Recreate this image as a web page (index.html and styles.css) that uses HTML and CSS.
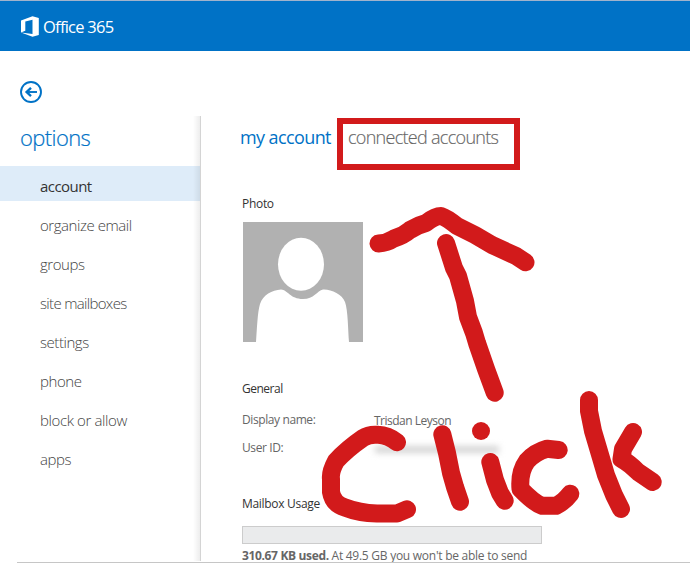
FILE: index.html
```html
<!DOCTYPE html>
<html lang="en">
<head>
<meta charset="utf-8">
<title>Office 365</title>
<link rel="stylesheet" href="styles.css">
</head>
<body>
<header class="topbar">
  <svg class="logo" width="18" height="21" viewBox="0 0 18 21"><path fill="#fff" fill-rule="evenodd" d="M0 4.500 11.500.3 17.800 2v17l-6.300 1.700L0 16.500l11.500 1.400V3.800L4.300 5.500v9.200L0 16.500z"/></svg>
  <span class="brand">Office 365</span>
</header>
<div class="layout">
  <aside class="sidebar">
    <svg class="back" width="22" height="22" viewBox="0 0 22 22" fill="none" stroke="#0072c6" stroke-width="1.9"><circle cx="11" cy="11" r="10"/><path d="M17 11H7"/><path d="M11 6.800 6.600 11l4.400 4.200" stroke-width="2.4"/></svg>
    <h1 class="title">options</h1>
    <nav class="menu">
      <a class="item selected">account</a>
      <a class="item">organize email</a>
      <a class="item">groups</a>
      <a class="item tight">site mailboxes</a>
      <a class="item">settings</a>
      <a class="item">phone</a>
      <a class="item loose">block or allow</a>
      <a class="item">apps</a>
    </nav>
  </aside>
  <div class="divider"></div>
  <main class="content">
    <div class="tabs"><span class="tab current">my account</span><span class="tab">connected accounts</span></div>
    <h2 class="heading">Photo</h2>
    <svg class="photo" width="120" height="120" viewBox="0 0 120 120"><path fill="#b1b1b1" d="M0 0h120v120H0z"/><ellipse cx="58" cy="42.300" rx="23" ry="26.500" fill="#fff"/><path fill="#fff" d="M13 120C14 107 14.500 90 17 82C20 73 29 68 38 67.500C45 68 47 77 60 77C71 77 74 69 80 67.500C88 67 99 72 102 80C105 88 105 108 106 120z"/></svg>
    <h2 class="heading general">General</h2>
    <dl class="details">
      <dt>Display name:</dt><dd class="name">Trisdan Leyson</dd>
      <dt>User ID:</dt><dd><span class="hidden-id"></span></dd>
    </dl>
    <h2 class="heading usage">Mailbox Usage</h2>
    <div class="meter"></div>
    <p class="quota"><b>310.67 KB used.</b> <span>At 49.5 GB you won't be able to send</span></p>
  </main>
</div>
<div class="bottom-line"></div>
<svg class="markup" width="690" height="563" viewBox="0 0 690 563" fill="none" stroke="#d21a1b" stroke-width="18" stroke-linecap="round" stroke-linejoin="round">
  <path d="M340 121H517V167H340z" stroke-width="6" stroke-linejoin="miter"/>
  <path d="M378.500 243.500Q387 243 394 238.500Q403 236 410 230Q418 225 426 223Q435 216 441 216Q447 218 457 226L475 235L492 245L516 256L525.500 262.300"/>
  <path d="M446 243L454 268L458 276L465 301L468 317L474 333L477 343L486 369L494.700 392.700"/>
  <path d="M397 442.300Q388 435 378 434.800Q369 434 363 438Q347 449 336 461Q330 472 331 479V492Q333 504 345 507.500Q359 513 377 513.600H397L407 509.300"/>
  <path d="M442.300 434.300L447 453L451 473L455 487L460 501.700"/>
  <path d="M481 431h.01"/>
  <path d="M490.300 462L495 480L500 493L504.700 500.700"/>
  <path d="M558.700 450L547 448.700Q535 452 527 461Q519 472 520.500 489Q534 503 542 505.800H556Q564 502 570.300 493.700"/>
  <path d="M589 400V411L593 431L601 458L606 475L614 495L621 509"/>
  <path d="M633 432L623 449L621.500 459Q629 463 638 472L652.700 482"/>
</svg>
</body>
</html>
```
FILE: styles.css
```css
* { box-sizing: border-box; }
body {
  margin: 0;
  height: 563px;
  overflow: hidden;
  position: relative;
  background: #fff;
  color: #666;
  font-family: "Open Sans", "Noto Sans", sans-serif;
  font-size: 12px;
  display: flex;
  flex-direction: column;
}
.topbar {
  height: 51px;
  flex: none;
  background: #0072c6;
  border-top: 1px solid #a1b3cc;
  display: flex;
  align-items: center;
  padding: 1px 0 0 21px;
}
.brand { color: #fff; font-size: 16.500px; letter-spacing: -0.75px; margin-left: 4px; }
.layout { display: flex; flex: 1; min-height: 0; }
.sidebar { width: 200px; padding-top: 30px; }
.back { display: block; margin-left: 20px; }
.title {
  margin: 19px 0 0 20px;
  height: 44px;
  font-size: 22px;
  line-height: 30px;
  font-weight: 300;
  letter-spacing: -0.6px;
  color: #0072c6;
  -webkit-text-stroke: 0.2px #0072c6;
}
.item {
  display: flex;
  align-items: center;
  height: 39px;
  padding: 0 0 2px 40px;
  font-size: 15px;
  font-weight: 300;
  letter-spacing: -0.45px;
  color: #444;
}
.tight { letter-spacing: -0.67px; }
.loose { letter-spacing: -0.38px; }
.selected { height: 35px; margin-bottom: 5px; background: #deecf9; color: #333; font-weight: 400; padding: 4px 0 0 40px; letter-spacing: -0.55px; }
.divider {
  width: 8px;
  margin: 65px 0 2px -7px;
  border-right: 1px solid #d4d4d4;
  background: linear-gradient(90deg, rgba(0, 0, 0, 0), rgba(0, 0, 0, .07));
}
.content { padding: 72px 0 0 41px; width: 489px; }
.tabs { height: 28px; line-height: 28px; font-size: 18px; white-space: nowrap; display: flex; gap: 17px; margin-left: -2px; }
.tab { font-weight: 300; letter-spacing: -0.7px; -webkit-text-stroke: 0.15px #666; }
.current { color: #0072c6; font-weight: 400; letter-spacing: -0.6px; -webkit-text-stroke: 0; }
.heading { margin: 0; font-size: 12px; line-height: 18px; font-weight: 400; letter-spacing: -0.3px; color: #333; }
.tabs + .heading { margin-top: 44px; }
.photo { display: block; margin: 9px 0 0 1px; }
.general { margin-top: 38px; letter-spacing: -0.5px; }
.details { display: grid; grid-template-columns: 132px 1fr; grid-auto-rows: 28px; line-height: 28px; margin: 8px 0 0; letter-spacing: -0.4px; }
.details dd { margin: 0; }
.details .name { padding-top: 1px; letter-spacing: -0.5px; }
.hidden-id { display: block; width: 124px; height: 7px; margin: 12px 0 0 1px; background: #d4d4d4; filter: blur(3px); }
.usage { margin-top: 33px; }
.meter { width: 300px; height: 18px; margin-top: 13px; background: #eaebec; border: 1px solid #ccc; }
.quota { margin: 3px 0 0; line-height: 18px; letter-spacing: -0.26px; white-space: nowrap; }
.quota b { letter-spacing: -0.35px; }
.bottom-line { position: absolute; left: 17px; right: 0; bottom: 0; height: 1px; background: #c6c6c6; }
.markup { position: absolute; left: 0; top: 0; }
```
